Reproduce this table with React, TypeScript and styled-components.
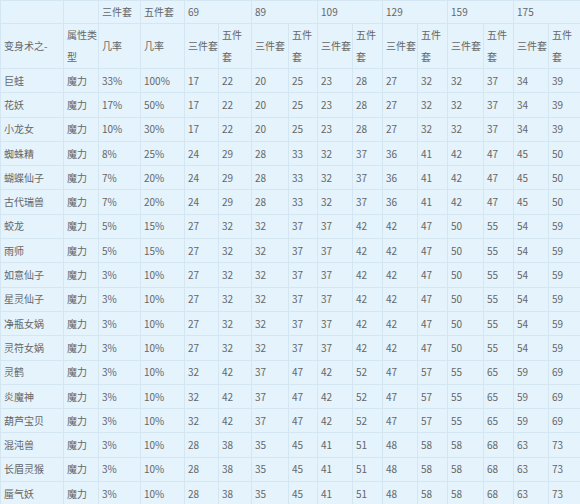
import React from "react";
import styled, { createGlobalStyle } from "styled-components";

const Global = createGlobalStyle`
  html, body { margin: 0; padding: 0; background: #e4f3fc; }
  body { overflow: hidden; }
`;

const Table = styled.table`
  border-collapse: collapse;
  table-layout: fixed;
  width: 580px;
  background: #e4f3fc;
  font-family: "Noto Sans CJK SC", "Noto Sans", sans-serif;
  font-size: 10px;
  color: #666;
`;

const Row = styled.tr<{ $h: number }>`
  height: ${(p) => p.$h}px;
`;

const Cell = styled.td`
  border: 1px solid #d3e6f1;
  padding: 0 0 0 3px;
  line-height: 22px;
  vertical-align: middle;
  text-align: left;
  white-space: normal;
  word-break: break-all;
  overflow: hidden;
`;

const widths = [63, 35, 42, 44, 34, 33, 37, 29, 35, 30, 35, 30, 36, 30, 35, 32];
const levels = ["69", "89", "109", "129", "159", "175"];

type R = [string, string, string, string, number[]];
const A = [17, 22, 20, 25, 23, 28, 27, 32, 32, 37, 34, 39];
const B = [24, 29, 28, 33, 32, 37, 36, 41, 42, 47, 45, 50];
const C = [27, 32, 32, 37, 37, 42, 42, 47, 50, 55, 54, 59];
const D = [32, 42, 37, 47, 42, 52, 47, 57, 55, 65, 59, 69];
const E = [28, 38, 35, 45, 41, 51, 48, 58, 58, 68, 63, 73];

const rows: R[] = [
  ["巨蛙", "魔力", "33%", "100%", A],
  ["花妖", "魔力", "17%", "50%", A],
  ["小龙女", "魔力", "10%", "30%", A],
  ["蜘蛛精", "魔力", "8%", "25%", B],
  ["蝴蝶仙子", "魔力", "7%", "20%", B],
  ["古代瑞兽", "魔力", "7%", "20%", B],
  ["蛟龙", "魔力", "5%", "15%", C],
  ["雨师", "魔力", "5%", "15%", C],
  ["如意仙子", "魔力", "3%", "10%", C],
  ["星灵仙子", "魔力", "3%", "10%", C],
  ["净瓶女娲", "魔力", "3%", "10%", C],
  ["灵符女娲", "魔力", "3%", "10%", C],
  ["灵鹤", "魔力", "3%", "10%", D],
  ["炎魔神", "魔力", "3%", "10%", D],
  ["葫芦宝贝", "魔力", "3%", "10%", D],
  ["混沌兽", "魔力", "3%", "10%", E],
  ["长眉灵猴", "魔力", "3%", "10%", E],
  ["蜃气妖", "魔力", "3%", "10%", E],
];

export default function App() {
  return (
    <>
      <Global />
      <Table>
        <colgroup>
          {widths.map((w, i) => (
            <col key={i} style={{ width: w }} />
          ))}
        </colgroup>
        <tbody>
          <Row $h={23}>
            <Cell />
            <Cell />
            <Cell>三件套</Cell>
            <Cell>五件套</Cell>
            {levels.map((l) => (
              <Cell key={l} colSpan={2}>
                {l}
              </Cell>
            ))}
          </Row>
          <Row $h={44}>
            <Cell>变身术之-</Cell>
            <Cell>属性类型</Cell>
            <Cell>几率</Cell>
            <Cell>几率</Cell>
            {levels.map((l) => (
              <React.Fragment key={l}>
                <Cell>三件套</Cell>
                <Cell>五件套</Cell>
              </React.Fragment>
            ))}
          </Row>
          {rows.map(([name, attr, p3, p5, nums]) => (
            <Row $h={24.3} key={name}>
              <Cell>{name}</Cell>
              <Cell>{attr}</Cell>
              <Cell>{p3}</Cell>
              <Cell>{p5}</Cell>
              {nums.map((n, i) => (
                <Cell key={i}>{n}</Cell>
              ))}
            </Row>
          ))}
        </tbody>
      </Table>
    </>
  );
}
